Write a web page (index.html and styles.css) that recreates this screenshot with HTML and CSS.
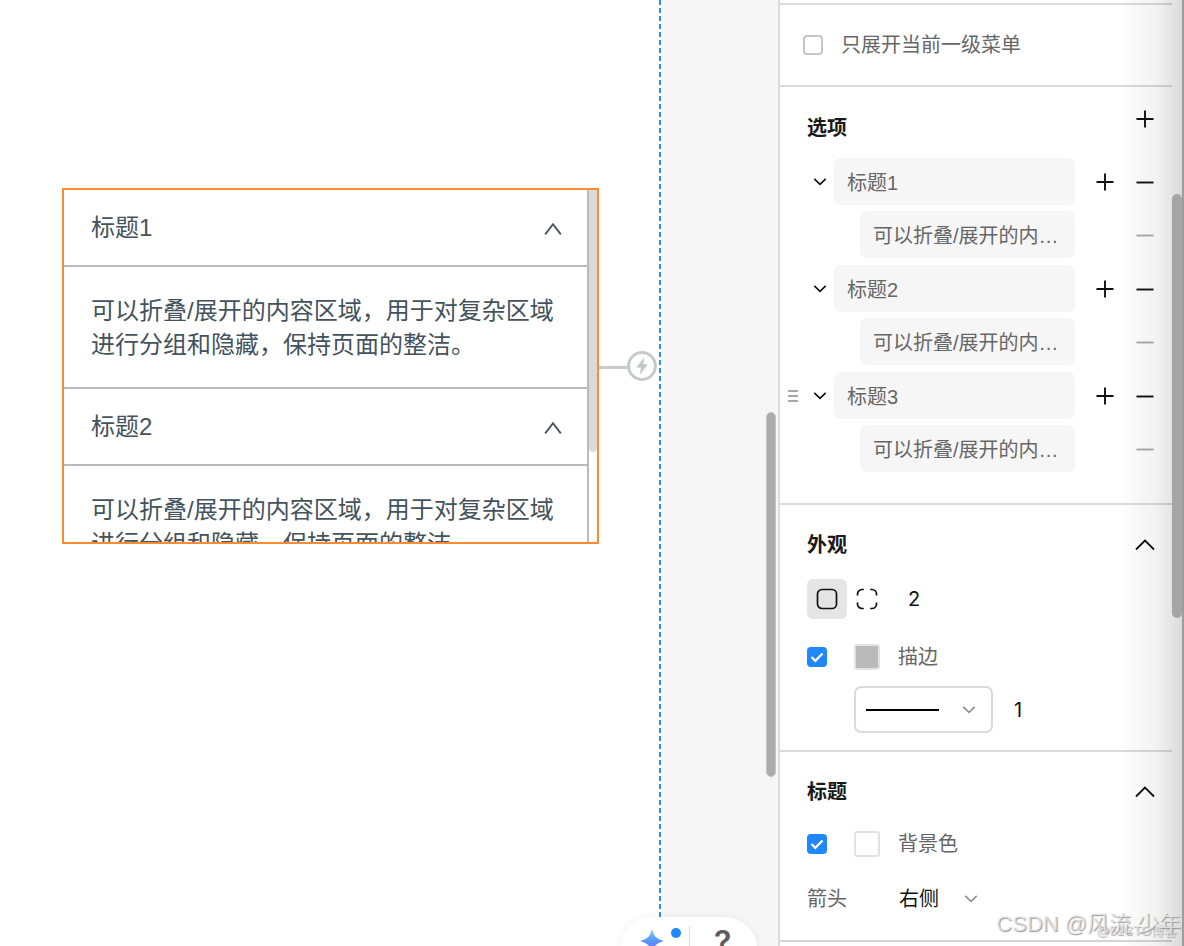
FILE: index.html
```html
<!DOCTYPE html>
<html lang="zh-CN">
<head>
<meta charset="utf-8">
<title>折叠面板</title>
<link rel="stylesheet" href="styles.css">
</head>
<body>
<svg class="defs" aria-hidden="true">
  <symbol id="plus" viewBox="0 0 20 20"><path d="M1.500 10H18.500M10 1.500V18.500" fill="none" stroke="currentColor" stroke-width="1.9"/></symbol>
  <symbol id="minus" viewBox="0 0 20 20"><path d="M1.500 10.5H18.500" fill="none" stroke="currentColor" stroke-width="1.9"/></symbol>
  <symbol id="down" viewBox="0 0 18 18"><path d="M3.3 5.8L9 11.4L14.7 5.8" fill="none" stroke="currentColor" stroke-width="1.7"/></symbol>
  <symbol id="up" viewBox="0 0 20 20"><path d="M1 14.5L10 5.5L19 14.5" fill="none" stroke="currentColor" stroke-width="1.8"/></symbol>
  <symbol id="caret" viewBox="0 0 18 18"><path d="M1.2 15.4L9 5.2L16.8 15.4" fill="none" stroke="currentColor" stroke-width="1.8"/></symbol>
</svg>

<main class="canvas">
  <div class="artboard">
    <section class="widget">
      <div class="accordion">
        <button class="acc-head" type="button"><span>标题1</span><svg class="i18"><use href="#caret"/></svg></button>
        <p class="acc-body">可以折叠/展开的内容区域，用于对复杂区域进行分组和隐藏，保持页面的整洁。</p>
        <button class="acc-head" type="button"><span>标题2</span><svg class="i18"><use href="#caret"/></svg></button>
        <p class="acc-body">可以折叠/展开的内容区域，用于对复杂区域进行分组和隐藏，保持页面的整洁。</p>
      </div>
      <div class="widget-track"><div class="widget-thumb"></div></div>
    </section>
    <svg class="connector" viewBox="0 0 60 32" aria-hidden="true">
      <path d="M0 17.4H29" stroke="#c6cacc" stroke-width="3"/>
      <circle cx="43" cy="16" r="13.4" fill="#fff" stroke="#c6cacc" stroke-width="3"/>
      <path d="M45.5 7.2L37.2 17.5H42L40.6 25L48.9 14.3H44.2Z" fill="#c2c7ca"/>
    </svg>
  </div>
  <div class="gutter"></div>
  <div class="canvas-thumb"></div>
  <div class="dock">
    <button class="dock-btn" type="button" aria-label="AI">
      <svg class="star" viewBox="0 0 24 24">
        <defs><linearGradient id="sg" x1="0" y1="0" x2="0" y2="1"><stop offset="0" stop-color="#84c8ff"/><stop offset=".5" stop-color="#5596fb"/><stop offset="1" stop-color="#7a6cf5"/></linearGradient></defs>
        <path d="M12 0C14 7.500 16 9.500 24 12C16 14.500 14 16.500 12 24C10 16.500 8 14.500 0 12C8 9.500 10 7.500 12 0Z" fill="url(#sg)"/>
      </svg>
      <span class="dot"></span>
    </button>
    <button class="dock-btn help" type="button">?</button>
  </div>
</main>

<aside class="panel">
  <section class="sec sec-toggle">
    <label class="check-label"><input class="check" type="checkbox">只展开当前一级菜单</label>
  </section>

  <section class="sec sec-options">
    <header class="opt-head"><h2>选项</h2><button class="icon" type="button" aria-label="添加"><svg class="i20"><use href="#plus"/></svg></button></header>
    <div class="group">
      <div class="row">
        <span class="handle"></span>
        <button class="icon fold" type="button" aria-label="折叠"><svg class="i18"><use href="#down"/></svg></button>
        <input class="field" type="text" value="标题1" aria-label="标题">
        <button class="icon" type="button" aria-label="添加"><svg class="i20"><use href="#plus"/></svg></button>
        <button class="icon" type="button" aria-label="删除"><svg class="i20"><use href="#minus"/></svg></button>
      </div>
      <div class="row child">
        <input class="field" type="text" value="可以折叠/展开的内…" aria-label="内容">
        <button class="icon faint" type="button" aria-label="删除"><svg class="i20"><use href="#minus"/></svg></button>
      </div>
    </div>
    <div class="group">
      <div class="row">
        <span class="handle"></span>
        <button class="icon fold" type="button" aria-label="折叠"><svg class="i18"><use href="#down"/></svg></button>
        <input class="field" type="text" value="标题2" aria-label="标题">
        <button class="icon" type="button" aria-label="添加"><svg class="i20"><use href="#plus"/></svg></button>
        <button class="icon" type="button" aria-label="删除"><svg class="i20"><use href="#minus"/></svg></button>
      </div>
      <div class="row child">
        <input class="field" type="text" value="可以折叠/展开的内…" aria-label="内容">
        <button class="icon faint" type="button" aria-label="删除"><svg class="i20"><use href="#minus"/></svg></button>
      </div>
    </div>
    <div class="group">
      <div class="row">
        <span class="handle"><svg class="grip" viewBox="0 0 12 14"><path d="M1 2H11M1 7H11M1 12H11" stroke="#8a8a8a" stroke-width="1.300"/></svg></span>
        <button class="icon fold" type="button" aria-label="折叠"><svg class="i18"><use href="#down"/></svg></button>
        <input class="field" type="text" value="标题3" aria-label="标题">
        <button class="icon" type="button" aria-label="添加"><svg class="i20"><use href="#plus"/></svg></button>
        <button class="icon" type="button" aria-label="删除"><svg class="i20"><use href="#minus"/></svg></button>
      </div>
      <div class="row child">
        <input class="field" type="text" value="可以折叠/展开的内…" aria-label="内容">
        <button class="icon faint" type="button" aria-label="删除"><svg class="i20"><use href="#minus"/></svg></button>
      </div>
    </div>
  </section>

  <section class="sec sec-style">
    <header class="sec-head"><h2>外观</h2><button class="icon" type="button" aria-label="收起"><svg class="i20"><use href="#up"/></svg></button></header>
    <div class="radius-row">
      <button class="tile active" type="button" aria-label="统一圆角"><svg class="i24" viewBox="0 0 24 24"><rect x="2.500" y="2.500" width="19" height="19" rx="4.500" fill="none" stroke="#111" stroke-width="1.700"/></svg></button>
      <button class="tile" type="button" aria-label="独立圆角"><svg class="i24" viewBox="0 0 24 24"><path d="M2.500 8.500V7A4.500 4.500 0 0 1 7 2.500H8.800M15.200 2.500H17A4.500 4.500 0 0 1 21.500 7V8.500M21.500 15.500V17A4.500 4.500 0 0 1 17 21.500H15.200M8.800 21.500H7A4.500 4.500 0 0 1 2.500 17V15.500" fill="none" stroke="#111" stroke-width="1.700"/></svg></button>
      <input class="num" type="text" value="2" aria-label="圆角">
    </div>
    <div class="color-row">
      <input class="check" type="checkbox" id="stroke" checked>
      <button class="swatch gray" type="button" aria-label="描边颜色"></button>
      <label for="stroke">描边</label>
    </div>
    <div class="line-row">
      <div class="line-select">
        <select aria-label="线型"><option></option></select>
        <svg class="line-mark" viewBox="0 0 73 18" aria-hidden="true"><path d="M0 9H73" stroke="#000" stroke-width="1.900"/></svg>
        <svg class="i18 arrow"><use href="#down"/></svg>
      </div>
      <input class="num" type="text" value="1" aria-label="描边宽度">
    </div>
  </section>

  <section class="sec sec-title">
    <header class="sec-head"><h2>标题</h2><button class="icon" type="button" aria-label="收起"><svg class="i20"><use href="#up"/></svg></button></header>
    <div class="color-row">
      <input class="check" type="checkbox" id="bg" checked>
      <button class="swatch" type="button" aria-label="背景颜色"></button>
      <label for="bg">背景色</label>
    </div>
    <div class="arrow-row">
      <label for="side">箭头</label>
      <div class="side-select">
        <select id="side"><option>右侧</option></select>
        <svg class="i18 arrow"><use href="#down"/></svg>
      </div>
    </div>
  </section>

  <div class="shade"></div>
  <div class="panel-thumb"></div>
  <div class="mark mark-small">@51CTO博客</div>
  <div class="mark mark-large">CSDN @风流 少年</div>
</aside>
</body>
</html>
```

FILE: styles.css
```css
* { box-sizing: border-box; }

body {
  margin: 0;
  height: 100vh;
  display: flex;
  overflow: hidden;
  background: #fff;
  color: #666;
  font: 20px/28px "Liberation Sans", "Noto Sans CJK SC", sans-serif;
}

button, input, select {
  margin: 0;
  padding: 0;
  border: 0;
  outline: 0;
  background: none;
  color: inherit;
  font: inherit;
  appearance: none;
}

svg { display: block; flex: none; }
h2, p { margin: 0; }
.defs { position: absolute; width: 0; height: 0; }
.i18 { width: 18px; height: 18px; }
.i20 { width: 20px; height: 20px; }
.i24 { width: 24px; height: 24px; }

/* Canvas */
.canvas {
  position: relative;
  flex: 1;
  min-width: 0;
  display: flex;
  overflow: hidden;
}
.artboard {
  position: relative;
  flex: 1;
  background: repeating-linear-gradient(#2f8cfb 0 5px, #fff 5px 8px) right / 2px 100% no-repeat;
}
.gutter {
  width: 117px;
  background: #f6f6f6;
  border-left: 3px solid #fafafc;
}
.canvas-thumb {
  position: absolute;
  right: 2px;
  top: 412px;
  width: 10px;
  height: 365px;
  border: 1px solid #c4c4c4;
  border-radius: 5px;
  background: #acacac;
}

.widget {
  position: absolute;
  left: 62px;
  top: 188px;
  width: 537px;
  height: 356px;
  display: flex;
  overflow: hidden;
  border: 2px solid #fd8b30;
  background: #fff;
  color: #44525c;
  font-size: 24px;
  line-height: 34px;
}
.accordion { flex: 1; }
.acc-head {
  width: 100%;
  display: flex;
  align-items: center;
  justify-content: space-between;
  padding: 21px 25px 20px 27px;
  border-bottom: 2px solid #bababa;
}
.acc-body {
  padding: 27px 27px 25px;
  border-bottom: 2px solid #bababa;
}
.widget-track {
  width: 10px;
  border-left: 2px solid #bababa;
}
.widget-thumb {
  height: 262px;
  border-radius: 0 0 4px 4px;
  background: #dadada;
}
.connector {
  position: absolute;
  left: 599px;
  top: 350px;
  width: 60px;
  height: 32px;
}

.dock {
  position: absolute;
  right: 21px;
  bottom: -35px;
  display: flex;
  align-items: flex-start;
  width: 137px;
  height: 64px;
  border-radius: 32px;
  background: #fff;
  box-shadow: 0 0 8px rgba(0, 0, 0, 0.06);
}
.dock-btn { position: relative; flex: 1; }
.star { width: 24px; height: 24px; margin: 12px 0 0 20px; }
.dot {
  position: absolute;
  left: 51px;
  top: 11px;
  width: 10px;
  height: 10px;
  border-radius: 5px;
  background: #1f87ff;
}
.help {
  color: #5c5c5c;
  font: 600 32px/52px Inter, sans-serif;
}
.help::before {
  content: "";
  position: absolute;
  left: 0;
  top: 9px;
  width: 1px;
  height: 40px;
  background: #ddd;
}

/* Property panel */
.panel {
  position: relative;
  flex: none;
  width: 406px;
  padding: 3px 12px 0 0;
  border-left: 2px solid #dcdcdc;
}
.sec { border-top: 2px solid #dadada; }
.sec:last-of-type { border-bottom: 2px solid #d4d4d4; }
h2 {
  color: #1a1a1a;
  font-size: 20px;
  font-weight: bold;
}

.sec-toggle { padding: 26px 23px; }
.check-label { display: flex; align-items: center; gap: 18px; }
.check {
  width: 20px;
  height: 20px;
  flex: none;
  border: 2px solid #c6c6c6;
  border-radius: 4px;
}
.check:checked {
  border: 0;
  background: #1f87ff url("data:image/svg+xml,%3Csvg xmlns='http://www.w3.org/2000/svg' viewBox='0 0 20 20'%3E%3Cpath d='M4.500 10L8.300 13.800L15.500 6.500' fill='none' stroke='white' stroke-width='2.300'/%3E%3C/svg%3E") center / 20px;
}

.icon { display: block; flex: none; color: #111; }
.faint { color: #aaa; }

.sec-options { padding: 22px 17px 31px 7px; }
.opt-head {
  display: flex;
  align-items: flex-start;
  justify-content: space-between;
  padding-left: 20px;
  margin-bottom: 16px;
}
.opt-head h2 { padding-top: 5px; }
.group { display: flex; flex-direction: column; gap: 6px; }
.group + .group { margin-top: 7px; }
.row { display: flex; align-items: center; gap: 20px; }
.handle { flex: none; width: 12px; margin-right: -8px; }
.grip { width: 12px; height: 14px; }
.fold { margin-right: -15px; }
.field {
  flex: 1;
  min-width: 0;
  height: 47px;
  padding: 0 13px;
  border-radius: 7px;
  background: #f6f6f6;
}
.child { gap: 60px; padding-left: 73px; }

.sec-style { padding: 26px 0 17px 27px; }
.sec-title { padding: 26px 0 27px 27px; }
.sec-head {
  display: flex;
  align-items: center;
  justify-content: space-between;
  padding-right: 17px;
}
.radius-row { display: flex; align-items: center; margin-top: 20px; }
.tile {
  display: grid;
  place-items: center;
  width: 40px;
  height: 40px;
  border-radius: 6px;
}
.active { background: #e5e5e5; }
.num {
  width: 60px;
  margin-left: 21px;
  color: #111;
  font-family: Inter, sans-serif;
}
.color-row { display: flex; align-items: center; margin-top: 24px; }
.swatch {
  width: 26px;
  height: 26px;
  margin: 0 18px 0 27px;
  border: 2px solid #e2e2e2;
  border-radius: 3px;
  background: #fff;
}
.gray { background: #bababa; }
.line-row {
  display: flex;
  align-items: center;
  margin: 15px 0 0 47px;
}
.line-select {
  display: grid;
  grid-template-columns: 73px 18px;
  justify-content: space-between;
  align-items: center;
  width: 139px;
  height: 47px;
  padding: 0 13px 0 10px;
  border: 2px solid #dadada;
  border-radius: 7px;
}
.line-select select { grid-area: 1 / 1 / 2 / 3; width: 100%; }
.line-mark { grid-area: 1 / 1; width: 73px; height: 18px; pointer-events: none; }
.arrow { color: #8f8f8f; pointer-events: none; }
.line-select .arrow { grid-area: 1 / 2; }
.arrow-row { display: flex; align-items: center; gap: 52px; margin-top: 27px; }
.side-select { display: flex; align-items: center; gap: 23px; }
.side-select select { color: #111; }

/* Overlays along the window edge */
.shade {
  position: absolute;
  inset: 0 0 0 auto;
  width: 66px;
  border-right: 2px solid rgba(0, 0, 0, 0.38);
  background: linear-gradient(to right, rgba(0, 0, 0, 0), rgba(0, 0, 0, 0.05) 60%, rgba(0, 0, 0, 0.14));
  pointer-events: none;
}
.panel-thumb {
  position: absolute;
  right: 2px;
  top: 194px;
  width: 10px;
  height: 424px;
  border-radius: 5px;
  background: #a5a5a5;
}
.mark {
  position: absolute;
  white-space: nowrap;
  pointer-events: none;
}
.mark-large {
  right: 3px;
  bottom: 8px;
  color: rgba(240, 240, 240, 0.7);
  font-size: 22px;
  text-shadow: 1px 1px 1px #999;
}
.mark-small {
  right: 7px;
  bottom: 1px;
  color: rgba(225, 225, 225, 0.8);
  font-size: 13px;
  text-shadow: 1px 1px 1px #aaa;
}
```
